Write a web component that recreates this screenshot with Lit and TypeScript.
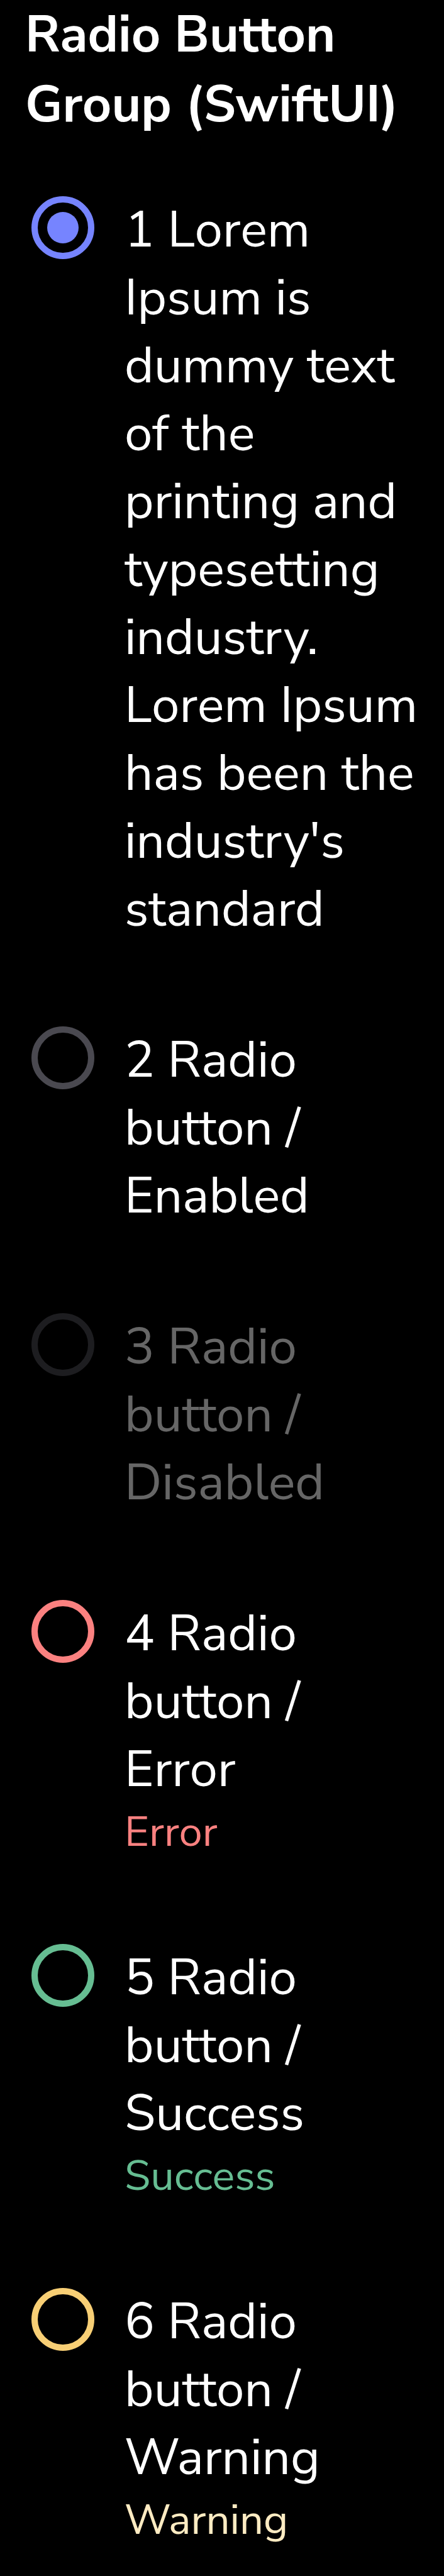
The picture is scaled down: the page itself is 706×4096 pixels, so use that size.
import { LitElement, html, css, nothing } from "lit";
import { customElement, property, state } from "lit/decorators.js";
import { classMap } from "lit/directives/class-map.js";

type Status = "default" | "error" | "success" | "warning";

interface Option {
  id: string;
  label: string;
  status?: Status;
  helper?: string;
  disabled?: boolean;
}

const OPTIONS: Option[] = [
  {
    id: "1",
    label:
      "1 Lorem Ipsum is dummy text of the printing and typesetting industry. Lorem Ipsum has been the industry's standard",
  },
  { id: "2", label: "2 Radio button / Enabled" },
  { id: "3", label: "3 Radio button / Disabled", disabled: true },
  { id: "4", label: "4 Radio button / Error", status: "error", helper: "Error" },
  { id: "5", label: "5 Radio button / Success", status: "success", helper: "Success" },
  { id: "6", label: "6 Radio button / Warning", status: "warning", helper: "Warning" },
];

@customElement("radio-group")
export class RadioGroup extends LitElement {
  @property({ attribute: false }) options: Option[] = [];
  @property() heading = "";
  @state() private selected = "1";

  static styles = css`
    :host {
      display: block;
    }
    .group {
      border: 0;
      margin: 0;
      padding: 0;
      min-width: 0;
    }
    .heading {
      padding: 0;
      font-size: 81px;
      line-height: 111px;
      font-weight: 700;
      margin-bottom: 90px;
    }
    .options {
      display: flex;
      flex-direction: column;
      gap: 132px;
    }
    .option {
      --ring: #4a4950;
      display: flex;
      align-items: flex-start;
      gap: 48px;
      padding-left: 10px;
    }
    .error {
      --ring: #fb8180;
      --helper: #fb8180;
    }
    .success {
      --ring: #66bd92;
      --helper: #66bd92;
    }
    .warning {
      --ring: #f8cf75;
      --helper: #fdebc2;
    }
    .disabled {
      opacity: 0.4;
    }
    .radio {
      appearance: none;
      flex: none;
      display: grid;
      place-items: center;
      box-sizing: border-box;
      width: 100px;
      height: 100px;
      margin: 0;
      border: 10px solid var(--ring);
      border-radius: 50%;
    }
    .radio:checked {
      border-color: #7684ff;
    }
    .radio:checked::before {
      content: "";
      width: 50px;
      height: 50px;
      border-radius: 50%;
      background: #7684ff;
    }
    .text {
      flex: 1;
      min-width: 0;
    }
    .label {
      display: block;
      font-size: 80px;
      line-height: 108px;
    }
    .helper {
      margin: 0;
      font-size: 67px;
      line-height: 91px;
      color: var(--helper);
    }
  `;

  private renderOption(o: Option) {
    const status = o.status ?? "default";
    return html`
      <div class=${classMap({ option: true, [status]: true, disabled: !!o.disabled })}>
        <input
          class="radio"
          type="radio"
          name="options"
          id="option-${o.id}"
          aria-describedby=${o.helper ? `helper-${o.id}` : nothing}
          .checked=${this.selected === o.id}
          ?disabled=${o.disabled}
          @change=${() => (this.selected = o.id)}
        />
        <div class="text">
          <label class="label" for="option-${o.id}">${o.label}</label>
          ${o.helper ? html`<p class="helper" id="helper-${o.id}">${o.helper}</p>` : nothing}
        </div>
      </div>
    `;
  }

  render() {
    return html`
      <fieldset class="group">
        <legend class="heading">${this.heading}</legend>
        <div class="options">${this.options.map((o) => this.renderOption(o))}</div>
      </fieldset>
    `;
  }
}

@customElement("app-root")
export class AppRoot extends LitElement {
  static styles = css`
    :host {
      display: block;
      box-sizing: border-box;
      min-height: 100vh;
      padding: 0 40px;
      background: #000;
      color: #fff;
      font-family: "Nunito Sans", Nunito, "Open Sans", sans-serif;
    }
  `;

  render() {
    return html`<radio-group heading="Radio Button Group (SwiftUI)" .options=${OPTIONS}></radio-group>`;
  }
}
